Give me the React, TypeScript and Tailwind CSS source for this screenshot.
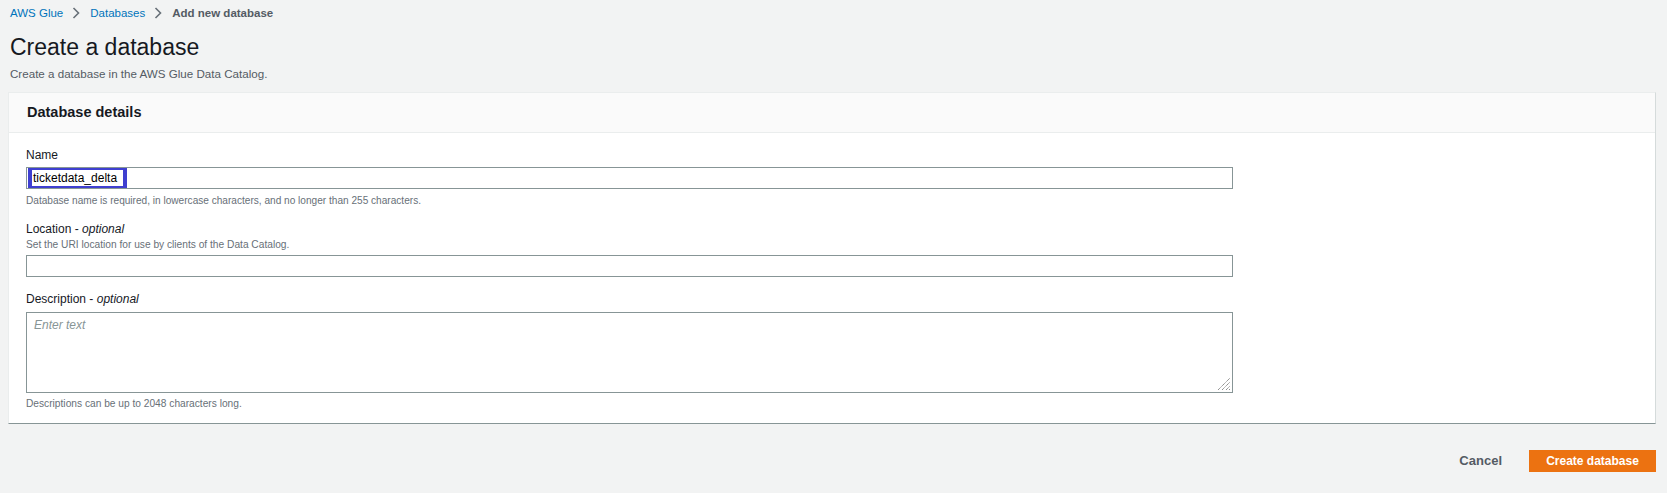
import React from "react";

const font = { fontFamily: '"Liberation Sans", Arial, sans-serif' };

function Chevron() {
  return (
    <svg width="8" height="12" viewBox="0 0 8 12" className="ml-[9px] mr-[10px]">
      <path d="M1.5 1 L6.5 6 L1.5 11" fill="none" stroke="#687078" strokeWidth="1.6" />
    </svg>
  );
}

function Field({ label, optional, hint, children }: { label: string; optional?: boolean; hint?: string; children?: React.ReactNode }) {
  return (
    <div className="flex flex-col">
      <div className="text-[12px] leading-4 text-[#16191f]">
        {label}
        {optional && (
          <>
            {" - "}
            <i>optional</i>
          </>
        )}
      </div>
      {hint && <div className="mt-[1px] text-[10.2px] leading-[14px] text-[#687078]">{hint}</div>}
      {children}
    </div>
  );
}

export default function App() {
  return (
    <div className="min-h-screen w-full bg-[#f2f3f3] pl-2 pr-[11px]" style={font}>
      {/* breadcrumb */}
      <div className="flex items-center pt-[5px] text-[11.5px] leading-4 pl-[2px]">
        <a className="text-[#0073bb]">AWS Glue</a>
        <Chevron />
        <a className="text-[#0073bb]">Databases</a>
        <Chevron />
        <span className="font-bold text-[#545b64]">Add new database</span>
      </div>

      {/* heading */}
      <h1 className="mt-[12px] pl-[2px] text-[23px] leading-[28px] text-[#16191f]">Create a database</h1>
      <p className="mt-[5px] pl-[2px] text-[11.6px] leading-4 text-[#545b64]">Create a database in the AWS Glue Data Catalog.</p>

      {/* panel */}
      <div className="mt-[10px] border-t border-l border-r border-b border-t-[#eaeded] border-l-[#eaeded] border-r-[#d5dbdb] border-b-[#879596] bg-white">
        <div className="flex h-[40px] items-center border-b border-[#eaeded] bg-[#fafafa] pl-[18px]">
          <h2 className="text-[14.5px] font-bold text-[#16191f]">Database details</h2>
        </div>

        <div className="flex flex-col pl-[17px] pt-[14px] pb-[12px]">
          <Field label="Name">
            <div className="mt-[4px] flex h-[22px] w-[1207px] items-center border border-[#879596] bg-white pl-[1px]">
              <span className="flex h-[20px] items-center border-y-2 border-l-[4px] border-r-[4px] border-[#3f3fd0] bg-white pl-[1px] pr-[6px] text-[12px] text-black">
                ticketdata_delta
              </span>
            </div>
            <div className="mt-[5px] text-[10.1px] leading-[14px] text-[#687078]">
              Database name is required, in lowercase characters, and no longer than 255 characters.
            </div>
          </Field>

          <div className="mt-[13px]">
            <Field label="Location" optional hint="Set the URI location for use by clients of the Data Catalog.">
              <div className="mt-[3px] h-[22px] w-[1207px] border border-[#879596] bg-white" />
            </Field>
          </div>

          <div className="mt-[14px]">
            <Field label="Description" optional>
              <div className="relative mt-[5px] h-[81px] w-[1207px]">
                <textarea
                  placeholder="Enter text"
                  className="h-full w-full resize-none border border-[#879596] bg-white px-[7px] py-[3px] text-[12px] italic text-[#16191f] placeholder:text-[#879596] outline-none"
                  style={font}
                />
                <svg width="14" height="14" viewBox="0 0 14 14" className="pointer-events-none absolute bottom-[2px] right-[2px]">
                  <path d="M1 13 L13 1 M5 13 L13 5 M9 13 L13 9 M12 13 L13 12" stroke="#7d7d7d" strokeWidth="1" strokeDasharray="1.2 0.6" />
                </svg>
              </div>
              <div className="mt-[4px] text-[10.2px] leading-[14px] text-[#687078]">Descriptions can be up to 2048 characters long.</div>
            </Field>
          </div>
        </div>
      </div>

      {/* actions */}
      <div className="mt-[26px] flex items-center justify-end">
        <button className="mr-[27px] text-[13px] font-bold text-[#545b64]">Cancel</button>
        <button className="h-[22px] w-[127px] bg-[#ec7211] text-[12px] font-bold text-white">Create database</button>
      </div>
    </div>
  );
}
